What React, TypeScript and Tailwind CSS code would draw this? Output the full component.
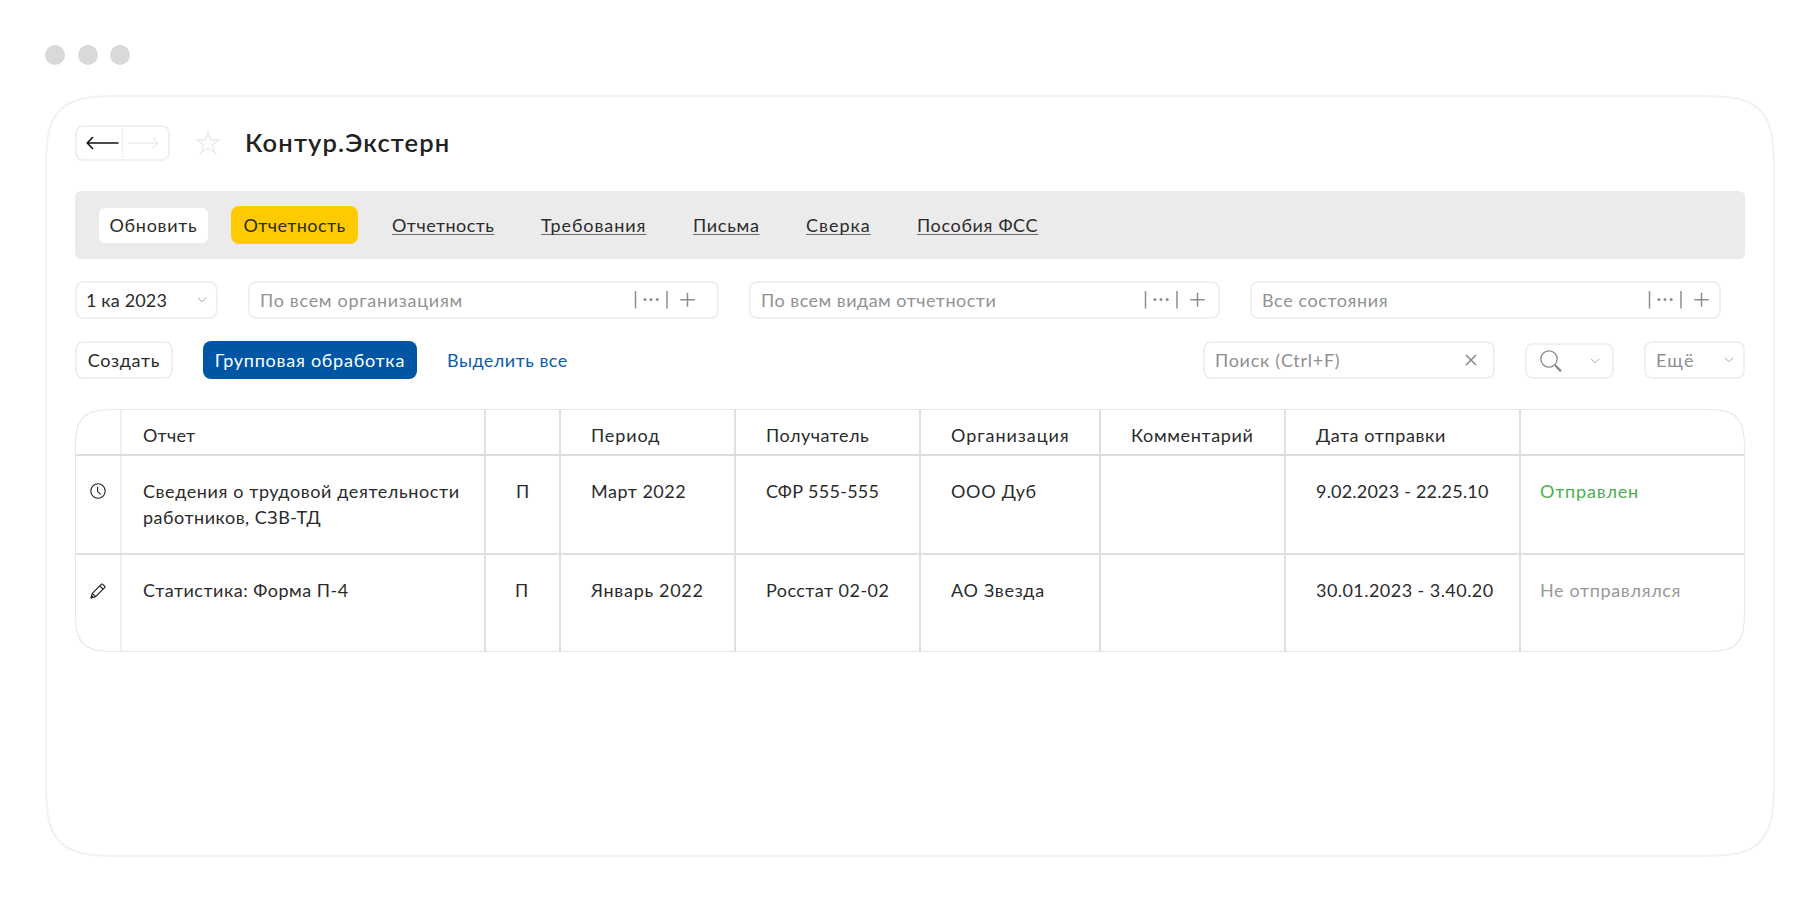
import type { ReactNode } from 'react';
import clsx from 'clsx';

const links = [
  { label: 'Отчетность', className: 'ml-[34px] w-[149px] tracking-[0.45px]' },
  { label: 'Требования', className: 'w-[152px] tracking-[0.9px]' },
  { label: 'Письма', className: 'w-[113px] tracking-[0.7px]' },
  { label: 'Сверка', className: 'w-[111px] tracking-[1px]' },
  { label: 'Пособия ФСС', className: 'tracking-[0.65px]' },
];

const columns = [
  { label: '', className: '' },
  { label: 'Отчет', className: 'pl-[21px] tracking-[0.2px]' },
  { label: '', className: '' },
  { label: 'Период', className: 'pl-[30px] tracking-[0.9px]' },
  { label: 'Получатель', className: 'pl-[30px] tracking-[0.5px]' },
  { label: 'Организация', className: 'pl-[30px] tracking-[0.95px]' },
  { label: 'Комментарий', className: 'pl-[30px] tracking-[0.65px]' },
  { label: 'Дата отправки', className: 'pl-[30px] tracking-[0.6px]' },
  { label: '', className: '' },
];

const gridCols = 'grid grid-cols-[46px_364px_75px_175px_185px_180px_185px_235px_1fr]';

function Chevron({ className }: { className?: string }) {
  return (
    <svg viewBox="0 0 10 6" className={clsx('h-[6px] w-[10px] shrink-0', className)} fill="none" stroke="#a3a3a3" strokeWidth="1">
      <path d="M1 0.8 5 4.8 9 0.8" />
    </svg>
  );
}

function Star() {
  return (
    <svg viewBox="0 0 26 26" className="h-[26px] w-[26px]" fill="none" stroke="#ececec" strokeWidth="1.7">
      <path d="M13 2.2 15.6 9.9H24L17.3 14.7 19.9 22.9 13 17.9 6.1 22.9 8.7 14.7 2 9.9H10.4Z" />
    </svg>
  );
}

function ClockIcon() {
  return (
    <svg viewBox="0 0 16 16" className="h-4 w-4" fill="none" stroke="#222" strokeWidth="1.1">
      <circle cx="8" cy="8" r="7.2" />
      <path d="M7.6 3.8V8.6L10.8 11.4" />
    </svg>
  );
}

function PencilIcon() {
  return (
    <svg viewBox="0 0 16 16" className="h-4 w-4" fill="none" stroke="#222" strokeWidth="1.2" strokeLinejoin="round">
      <path d="M1 15 2.3 10.3 11.3 1.3Q12 0.7 12.7 1.3L14.6 3.2Q15.3 3.9 14.6 4.6L5.6 13.6Z" />
      <path d="M2.3 10.3 5.6 13.6M9.8 2.9 13.1 6.1M1 15 2.9 13.1" />
    </svg>
  );
}

function SearchIcon() {
  return (
    <svg viewBox="0 0 22 22" className="h-[22px] w-[22px]" fill="none" stroke="#8a8a8a">
      <circle cx="9" cy="9" r="8.2" strokeWidth="1.3" />
      <path d="M14.6 14.6 16.5 16.5" strokeWidth="1.4" />
      <path d="M16.3 16.5 20.3 20.6" strokeWidth="2.4" strokeLinecap="round" />
    </svg>
  );
}

// Filter field with the "choose" and "add" controls on its right side
function FilterField({ label, textClass, className, toolsClass }: { label: string; textClass: string; className: string; toolsClass: string }) {
  return (
    <div className={clsx('flex h-[38px] items-center rounded-lg border-2 border-[#f0f0f0] pl-[10px] text-[#929292]', className)}>
      <span className={clsx('flex-1 whitespace-nowrap', textClass)}>{label}</span>
      <svg viewBox="0 0 64 20" className={clsx('h-5 w-16 shrink-0', toolsClass)} fill="none" stroke="#8f8f8f" strokeWidth="1.5">
        <path d="M2.5 1V18.5M34 1V18.5" />
        <path d="M47.3 9.8H61.7M54.5 2.8V16.8" />
        <g fill="#8f8f8f" stroke="none">
          <circle cx="12" cy="9.4" r="1.5" />
          <circle cx="18" cy="9.4" r="1.5" />
          <circle cx="24.2" cy="9.4" r="1.5" />
        </g>
      </svg>
    </div>
  );
}

function Cell({ children, className }: { children?: ReactNode; className?: string }) {
  return <div className={clsx('whitespace-nowrap border-r-2 border-[#dfdfdf] last:border-r-0', className)}>{children}</div>;
}

export default function App() {
  return (
    <div className="h-[902px] w-[1820px] overflow-hidden bg-white pl-[45px] pt-[45px] font-[Lato,sans-serif] text-[18px] leading-[26px] text-[#2b2b2b]">
      <div className="flex gap-[12.5px]">
        <span className="h-[20px] w-[20px] rounded-full bg-[#d9d9d9]" />
        <span className="h-[20px] w-[20px] rounded-full bg-[#d9d9d9]" />
        <span className="h-[20px] w-[20px] rounded-full bg-[#d9d9d9]" />
      </div>

      <div className="mt-[30px] h-[762px] w-[1730px] rounded-[90px] border-2 border-[#f2f2f2] px-[28px] pt-[28px] [corner-shape:squircle]">
        {/* Title */}
        <header className="flex h-[36px] items-center">
          <div className="flex h-[36px] w-[95px] items-center rounded-lg border-2 border-[#f0f0f0]">
            <svg viewBox="0 0 91 32" className="h-8 w-[91px]" fill="none" strokeWidth="1.6">
              <path d="M41 16H10.2M15.5 10.5 10.2 16 15.5 21.5" stroke="#111" strokeLinecap="round" strokeLinejoin="round" />
              <path d="M45.5 1V31" stroke="#f0f0f0" strokeWidth="1.5" />
              <path d="M51 16H81M75.5 10.5 81 16 75.5 21.5" stroke="#ededed" strokeWidth="1.5" />
            </svg>
          </div>
          <div className="ml-[25px]">
            <Star />
          </div>
          <h1 className="ml-[24px] -mt-[2px] text-[25.5px] font-semibold leading-[30px] tracking-[1.15px] text-[#222]">Контур.Экстерн</h1>
        </header>

        {/* Sections */}
        <nav className="mt-[30px] flex h-[68px] w-[1670px] items-center rounded-md bg-[#ebebeb] pl-[24px]">
          <button className="h-[35px] w-[109px] rounded-md bg-white tracking-[0.7px]">Обновить</button>
          <button className="ml-[23px] h-[38px] w-[127px] rounded-lg bg-[#ffcb00] tracking-[0.4px]">Отчетность</button>
          {links.map((link) => (
            <a key={link.label} className={clsx('whitespace-nowrap', link.className)}>
              <span className="underline decoration-[#6b6b6b] decoration-1 underline-offset-[2px] [text-decoration-skip-ink:none]">{link.label}</span>
            </a>
          ))}
        </nav>

        {/* Filters */}
        <div className="mt-[22px] flex">
          <div className="flex h-[38px] w-[143px] items-center justify-between rounded-lg border-2 border-[#f0f0f0] pl-[9px] pr-[9px]">
            <span className="tracking-[0.15px]">1 ка 2023</span>
            <Chevron />
          </div>
          <FilterField label="По всем организациям" textClass="tracking-[0.7px]" className="ml-[30px] w-[471px]" toolsClass="mr-[20px]" />
          <FilterField label="По всем видам отчетности" textClass="tracking-[0.48px]" className="ml-[30px] w-[471px]" toolsClass="mr-[11px]" />
          <FilterField label="Все состояния" textClass="tracking-[0.6px]" className="ml-[30px] w-[471px]" toolsClass="mr-[8px]" />
        </div>

        {/* Actions */}
        <div className="mt-[22px] flex h-[38px] w-[1670px] items-center">
          <button className="h-[38px] w-[98px] rounded-lg border-2 border-[#f0f0f0] tracking-[0.7px]">Создать</button>
          <button className="ml-[30px] h-[38px] w-[214px] rounded-lg bg-[#0055a5] tracking-[0.75px] text-white">Групповая обработка</button>
          <a className="ml-[30px] tracking-[0.48px] text-[#0b5cab]">Выделить все</a>
          <div className="ml-auto flex h-[38px] w-[292px] items-center justify-between rounded-lg border-2 border-[#f0f0f0] pl-[10px] pr-[16px] text-[#8f8f8f]">
            <span className="tracking-[0.72px]">Поиск (Ctrl+F)</span>
            <svg viewBox="0 0 12 12" className="h-3 w-3" stroke="#858585" strokeWidth="1.5">
              <path d="M1 1 11 11M11 1 1 11" />
            </svg>
          </div>
          <div className="ml-[30px] mt-[2px] flex h-[36px] w-[89px] items-center justify-between rounded-lg border-2 border-[#f0f0f0] pl-[13px] pr-[12px]">
            <SearchIcon />
            <Chevron />
          </div>
          <div className="ml-[30px] flex h-[38px] w-[101px] items-center justify-between rounded-lg border-2 border-[#f0f0f0] pl-[10px] pr-[9px] text-[#8f8f8f]">
            <span className="tracking-[1.2px]">Ещё</span>
            <Chevron />
          </div>
        </div>

        {/* Reports */}
        <div className="mt-[30px] h-[243px] w-[1670px] overflow-hidden rounded-[50px] border border-[#e6e6e6] [corner-shape:squircle]">
          <div className={clsx(gridCols, 'h-[46px] border-b-2 border-[#dcdcdc]')}>
            {columns.map((column, i) => (
              <Cell key={i} className={clsx('pt-[12px]', i === 0 && 'border-[#f0f0f0]', column.className)}>
                {column.label}
              </Cell>
            ))}
          </div>
          <div className={clsx(gridCols, 'h-[99px] border-b-2 border-[#dfdfdf]')}>
            <Cell className="border-[#f0f0f0] pl-[14px] pt-[27px]">
              <ClockIcon />
            </Cell>
            <Cell className="pl-[21px] pt-[22px]">
              <span className="tracking-[0.6px]">Сведения о трудовой деятельности</span>
              <br />
              <span className="tracking-[0.5px]">работников, СЗВ-ТД</span>
            </Cell>
            <Cell className="pl-[30px] pt-[22px]">П</Cell>
            <Cell className="pl-[30px] pt-[22px] tracking-[0.5px]">Март 2022</Cell>
            <Cell className="pl-[30px] pt-[22px] tracking-[0.25px]">СФР 555-555</Cell>
            <Cell className="pl-[30px] pt-[22px] tracking-[0.7px]">ООО Дуб</Cell>
            <Cell />
            <Cell className="pl-[30px] pt-[22px] tracking-[0.2px]">9.02.2023 - 22.25.10</Cell>
            <Cell className="pl-[19px] pt-[22px] tracking-[0.8px] text-[#4caf50]">Отправлен</Cell>
          </div>
          <div className={clsx(gridCols, 'h-[96px]')}>
            <Cell className="border-[#f0f0f0] pl-[14px] pt-[28px]">
              <PencilIcon />
            </Cell>
            <Cell className="pl-[21px] pt-[22px] tracking-[0.5px]">Статистика: Форма П-4</Cell>
            <Cell className="pl-[29px] pt-[22px]">П</Cell>
            <Cell className="pl-[30px] pt-[22px] tracking-[0.7px]">Январь 2022</Cell>
            <Cell className="pl-[30px] pt-[22px] tracking-[0.45px]">Росстат 02-02</Cell>
            <Cell className="pl-[30px] pt-[22px] tracking-[0.7px]">АО Звезда</Cell>
            <Cell />
            <Cell className="pl-[30px] pt-[22px] tracking-[0.45px]">30.01.2023 - 3.40.20</Cell>
            <Cell className="pl-[19px] pt-[22px] tracking-[0.65px] text-[#999]">Не отправлялся</Cell>
          </div>
        </div>
      </div>
    </div>
  );
}
